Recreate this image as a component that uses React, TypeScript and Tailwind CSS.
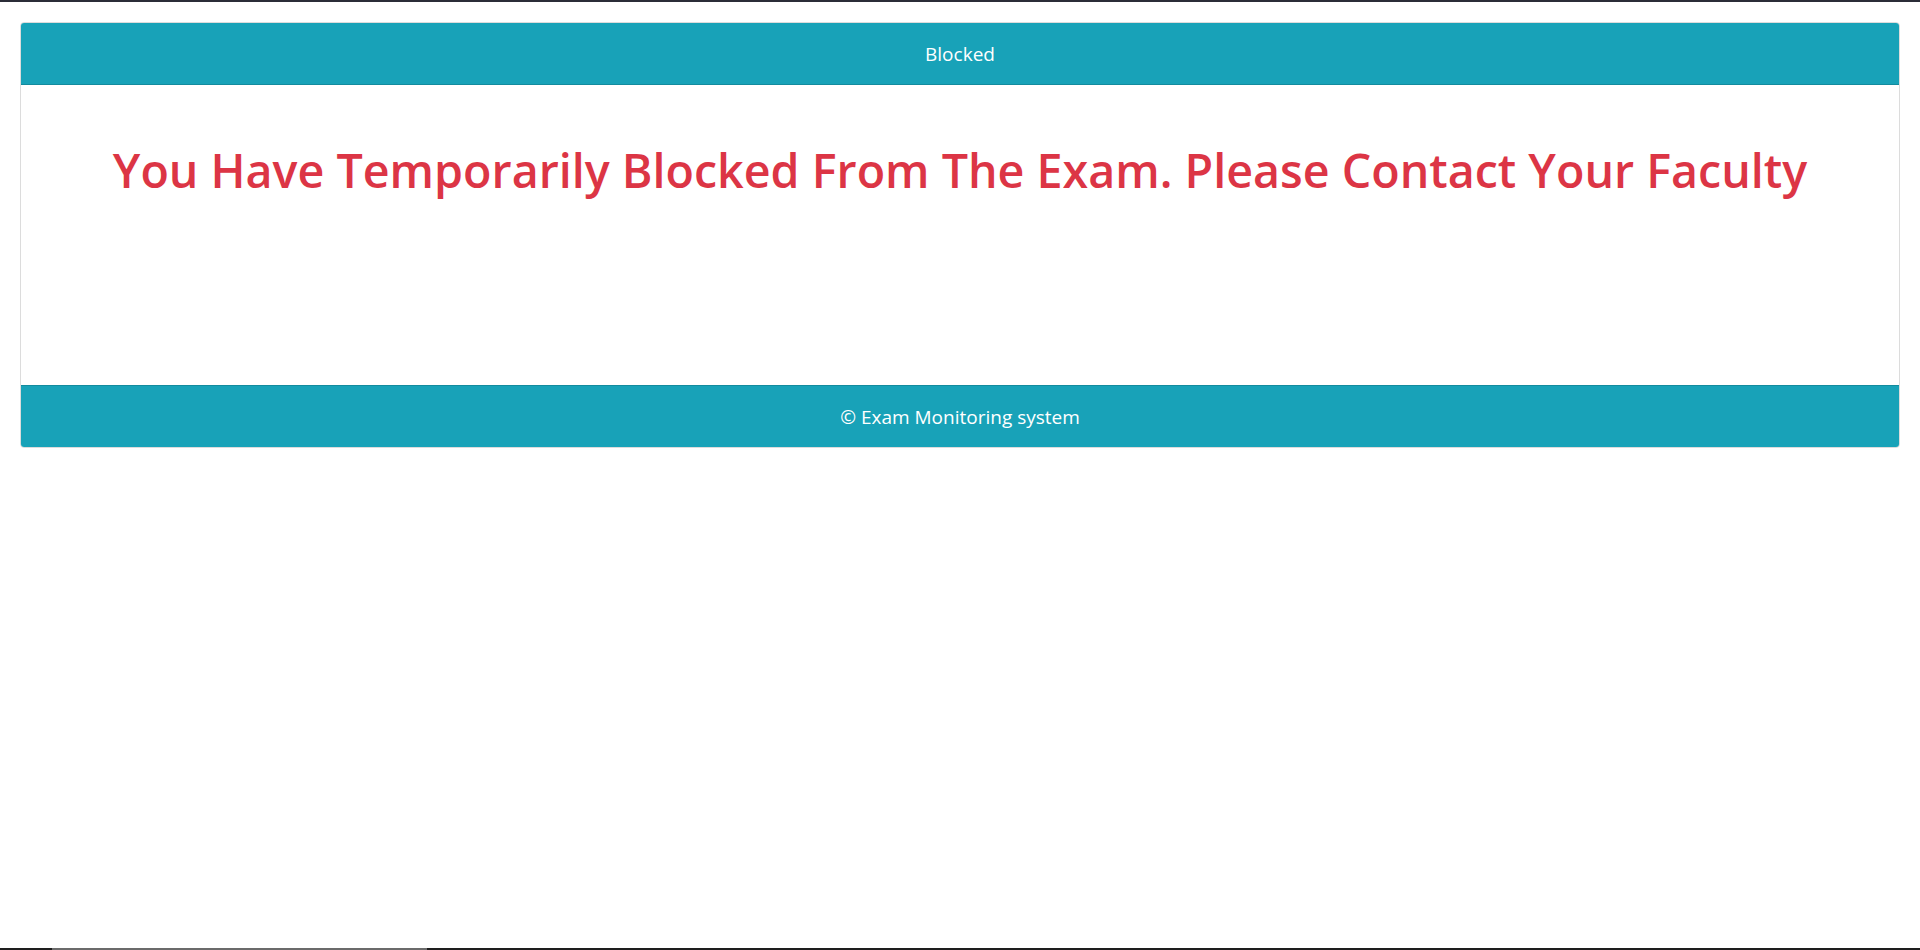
import React from 'react'

export default function App() {
  return (
    <div
      className="flex h-[950px] flex-col bg-white text-white"
      style={{ fontFamily: '"Open Sans", "Noto Sans", sans-serif' }}
    >
      {/* top chrome line */}
      <div className="h-[2px] bg-[#2b2d38]" />

      <div className="flex-1 px-[20px] pt-[20px]">
        <div className="rounded-[4px] border border-[#dcdcdc]">
          <div className="rounded-t-[3px] border-b border-[#138b9e] bg-[#18a2b8] pt-[17px] pb-[16px] text-center text-[19px] leading-[28px]">
            Blocked
          </div>
          <div className="h-[300px] pt-[57px] text-center">
            <h1 className="text-[46.6px] font-semibold leading-[56px] text-[#dc3545]">
              You Have Temporarily Blocked From The Exam. Please Contact Your Faculty
            </h1>
          </div>
          <div className="rounded-b-[3px] border-t border-[#138b9e] bg-[#18a2b8] pt-[17px] pb-[16px] text-center text-[19px] leading-[28px]">
            © Exam Monitoring system
          </div>
        </div>
      </div>

      {/* bottom scrollbar strip */}
      <div className="flex h-[2px] bg-[#1e1e1e]">
        <div className="ml-[52px] w-[375px] bg-[#6b6b6b]" />
      </div>
    </div>
  )
}
